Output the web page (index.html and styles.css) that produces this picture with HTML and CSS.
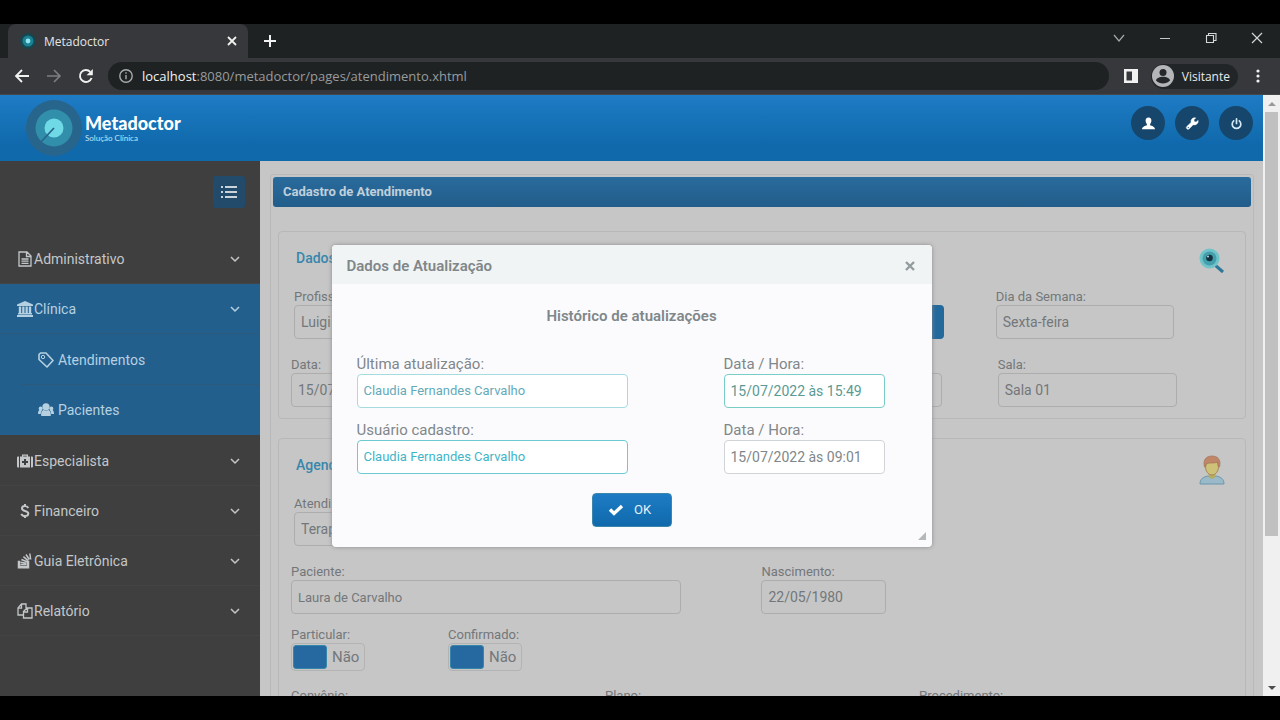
FILE: index.html
```html
<!DOCTYPE html>
<html lang="pt-BR">
<head>
<meta charset="utf-8">
<title>Metadoctor</title>
<link rel="stylesheet" href="styles.css">
</head>
<body>
<div class="browser">
  <div class="tabstrip">
    <div class="tab">
      <svg class="favicon" viewBox="0 0 16 16"><circle cx="8" cy="8" r="8" fill="#17464f"/><circle cx="8" cy="8" r="5.500" fill="#1b8294"/><circle cx="8" cy="8" r="2.400" fill="#8fe6ee"/></svg>
      <span class="tab-title">Metadoctor</span>
      <button class="chrome-btn" aria-label="Fechar guia"><svg width="16" height="16" viewBox="0 0 16 16" fill="none" stroke="#f1f1f1" stroke-width="1.8"><path d="M4 4l8 8M12 4l-8 8"/></svg></button>
    </div>
    <button class="chrome-btn new-tab" aria-label="Nova guia"><svg width="16" height="16" viewBox="0 0 16 16" fill="none" stroke="#f1f1f1" stroke-width="2"><path d="M8 2v12M2 8h12"/></svg></button>
    <div class="window-buttons">
      <button class="chrome-btn" aria-label="Pesquisar guias"><svg width="16" height="16" viewBox="0 0 16 16" fill="none" stroke="#a5a7a8" stroke-width="1.2"><path d="M3 5l5 6 5-6"/></svg></button>
      <button class="chrome-btn" aria-label="Minimizar"><svg width="16" height="16" viewBox="0 0 16 16" fill="none" stroke="#c5c7c8"><path d="M3 8.5h10"/></svg></button>
      <button class="chrome-btn" aria-label="Restaurar"><svg width="16" height="16" viewBox="0 0 16 16" fill="none" stroke="#d5d7d8" stroke-width="1.1"><path d="M3.500 5.500h7v7h-7zM5.500 5.500v-2h7.500v7h-2.500"/></svg></button>
      <button class="chrome-btn" aria-label="Fechar"><svg width="16" height="16" viewBox="0 0 16 16" fill="none" stroke="#d5d7d8" stroke-width="1.2"><path d="M3 3l10 10M13 3L3 13"/></svg></button>
    </div>
  </div>

  <div class="toolbar">
    <button class="chrome-btn" aria-label="Voltar"><svg width="16" height="16" viewBox="0 0 16 16" fill="none" stroke="#f1f1f1" stroke-width="1.8"><path d="M15 8H2M8 2L2 8l6 6"/></svg></button>
    <button class="chrome-btn" aria-label="Avançar"><svg width="16" height="16" viewBox="0 0 16 16" fill="none" stroke="#7c7f81" stroke-width="1.6"><path d="M1 8h13M8 2l6 6-6 6"/></svg></button>
    <button class="chrome-btn" aria-label="Recarregar"><svg width="16" height="16" viewBox="0 0 16 16"><path d="M13.600 10A6 6 0 1 1 12.300 3.800" fill="none" stroke="#f1f1f1" stroke-width="1.9"/><path d="M14.800 1v6.200H8.600z" fill="#f1f1f1"/></svg></button>
    <div class="address">
      <svg width="16" height="16" viewBox="0 0 16 16" fill="none" stroke="#a9abad" stroke-width="1.4"><circle cx="8" cy="8" r="6.200"/><path d="M8 7v4.300M8 4.300v1.500"/></svg>
      <span class="url"><b>localhost</b>:8080/metadoctor/pages/atendimento.xhtml</span>
    </div>
    <button class="chrome-btn" aria-label="Painel lateral"><svg width="16" height="16" viewBox="0 0 16 16"><path d="M1 1h14v14H1zM3.500 3.500v9h5.500v-9z" fill="#f1f1f1" fill-rule="evenodd"/></svg></button>
    <button class="profile"><svg width="22" height="22" viewBox="0 0 22 22"><circle cx="11" cy="11" r="11" fill="#b3b5b8"/><circle cx="11" cy="7.500" r="3.500" fill="#25282b"/><path d="M4 15.500c1-5 13-5 14 0-3.500 4-10.500 4-14 0z" fill="#25282b"/></svg>Visitante</button>
    <button class="chrome-btn" aria-label="Menu"><svg width="16" height="16" viewBox="0 0 16 16" fill="#f1f1f1"><circle cx="8" cy="3" r="1.600"/><circle cx="8" cy="8" r="1.600"/><circle cx="8" cy="13" r="1.600"/></svg></button>
  </div>

  <div class="viewport">
    <div class="page">
      <header class="topbar">
        <a class="brand" href="#">
          <svg class="logo" viewBox="0 0 56 56"><circle cx="28" cy="28" r="28" fill="#28658c"/><circle cx="28" cy="28" r="18.500" fill="#318fac"/><circle cx="28" cy="28" r="9.500" fill="#6fdae5"/><path d="M28 28L13 44" stroke="#28658c" stroke-width="1.800"/></svg>
          <span class="brand-text"><strong>Metadoctor</strong><small>Solução Clínica</small></span>
        </a>
        <nav class="top-actions">
          <button aria-label="Usuário"><svg viewBox="0 0 16 16" fill="#fff"><path d="M8 1.500c2.200 0 3.200 1.500 3.100 3.600-.1 1.800-.8 2.700-1.400 3.500v1.200c1.900.8 4.800 1.300 5.300 4.200H1c.5-2.900 3.400-3.400 5.300-4.200V8.600C5.700 7.800 5 6.900 4.900 5.100 4.800 3 5.800 1.500 8 1.500z"/></svg></button>
          <button aria-label="Configurações"><svg viewBox="0 0 16 16"><path d="M14 4.700a4 4 0 0 1-5.300 4.500L4.500 13.600a1.700 1.700 0 0 1-2.500-2.500l4.500-4.200A4 4 0 0 1 11.400 2L9.500 4l.3 2.100 2.100.4z" fill="#fff" stroke="#fff" stroke-width=".6"/><circle cx="3.500" cy="12.300" r=".7" fill="#16466b"/></svg></button>
          <button aria-label="Sair"><svg viewBox="0 0 16 16" fill="none" stroke="#d5ecf8" stroke-width="1.800" stroke-linecap="round"><path d="M5 5.200a4.600 4.600 0 1 0 6 0M8 3v5"/></svg></button>
        </nav>
      </header>

      <div class="shell">
        <aside class="sidebar">
          <button class="menu-toggle" aria-label="Alternar menu"><svg width="16" height="16" viewBox="0 0 16 16" stroke="#c9d3d9" stroke-width="2"><path d="M0 3h2M4 3h12M0 8h2M4 8h12M0 13h2M4 13h12"/></svg></button>
          <ul class="menu">
            <li><a href="#"><svg viewBox="0 0 16 16" fill="none" stroke="currentColor" stroke-width="1.300"><path d="M2 1h8l4 4v10H2zM9.500 1v4.500H14M4.500 8h7M4.500 10.200h7M4.500 12.400h7"/></svg>Administrativo<svg class="chev" viewBox="0 0 10 10"><path d="M1 3l4 4 4-4"/></svg></a></li>
            <li class="open"><a href="#"><svg viewBox="0 0 16 16" fill="currentColor"><path d="M8 0l8 3.500V5H0V3.500zM1.800 5.500h2.400v6.500h1V5.500h2.300v6.500h1V5.500h2.300v6.500h1V5.500h2.400v6.500h.8v1.500H1V12h.8zM0 14h16v2H0z"/></svg>Clínica<svg class="chev" viewBox="0 0 10 10"><path d="M1 3l4 4 4-4"/></svg></a>
              <ul class="submenu">
                <li><a href="#"><svg viewBox="0 0 16 16" fill="none" stroke="currentColor" stroke-width="1.600"><path d="M1 2.500L2.500 1H8l7 7.500L9 15 1 7.500z" stroke-linejoin="round"/><circle cx="5" cy="5" r="1.700" stroke-width="1"/></svg>Atendimentos</a></li>
                <li><a href="#"><svg viewBox="0 0 16 16" fill="currentColor"><circle cx="8" cy="4.800" r="3.600"/><circle cx="2.700" cy="6.500" r="2"/><circle cx="13.300" cy="6.500" r="2"/><path d="M3.300 14c-.8-4 1.500-6 2.500-6 1.300 1 3.100 1 4.400 0 1 0 3.300 2 2.500 6zM0 12C0 9 1 8 1.500 8h2.800C3 9.500 2.800 11 2.800 12H0zM16 12c0-3-1-4-1.500-4h-2.800c1.300 1.500 1.500 3 1.500 4H16z"/></svg>Pacientes</a></li>
              </ul>
            </li>
            <li><a href="#"><svg viewBox="0 0 16 16" fill="currentColor"><path d="M0 4.500Q0 3.500 1 3.500h1v11H1q-1 0-1-1zM14 3.500h1q1 0 1 1v9q0 1-1 1h-1zM3 3.500h2V1.500h6v2h2v11H3zM6.200 2.700v.8h3.600v-.8zM7 6v2H5v2h2v2h2v-2h2V8H9V6z" fill-rule="evenodd"/></svg>Especialista<svg class="chev" viewBox="0 0 10 10"><path d="M1 3l4 4 4-4"/></svg></a></li>
            <li><a href="#"><svg viewBox="0 0 16 16" fill="none" stroke="currentColor" stroke-width="2"><path d="M11.300 5C10.500 3.500 9.300 3 8 3 6.300 3 5 3.900 5 5.400c0 3.300 6.300 1.900 6.300 5.100C11.300 12 10 13 8 13c-1.700 0-3-.5-3.700-2.200M8 1v2M8 13v2"/></svg>Financeiro<svg class="chev" viewBox="0 0 10 10"><path d="M1 3l4 4 4-4"/></svg></a></li>
            <li><a href="#"><svg viewBox="0 0 16 16" fill="none" stroke="currentColor" stroke-width="1.500"><path d="M1.500 8.500h1v5h8v-5h1v6.300h-10z" fill="currentColor"/><path d="M3.500 11.600h6M3.500 9.300l6 .9M4.400 6.500l5.600 2.300M6.400 3.600l4.700 4M9 1.500l3.300 5M12.800.5l.9 6"/></svg>Guia Eletrônica<svg class="chev" viewBox="0 0 10 10"><path d="M1 3l4 4 4-4"/></svg></a></li>
            <li><a href="#"><svg viewBox="0 0 16 16" fill="none" stroke="currentColor" stroke-width="1.300"><path d="M6.500 12H1V5l3.500-4H9v4M4.500 1v4.200H1M6.500 8.500L10 5h5v10H6.500zM10.500 5v4h-4"/></svg>Relatório<svg class="chev" viewBox="0 0 10 10"><path d="M1 3l4 4 4-4"/></svg></a></li>
          </ul>
        </aside>

        <main class="content">
          <div class="panel">
            <h1 class="panel-title">Cadastro de Atendimento</h1>
            <section class="card">
              <div class="card-head">
                <h2>Dados</h2>
                <svg class="card-icon" viewBox="0 0 26 30"><path d="M16 17l8 7" stroke="#2d7898" stroke-width="3"/><circle cx="10.500" cy="10.500" r="10" fill="#6fc3c9"/><circle cx="10.500" cy="10.500" r="7" fill="#449fac"/><circle cx="10.500" cy="10" r="3.300" fill="#12303e"/><circle cx="9" cy="8.500" r="1" fill="#b9dce0"/></svg>
              </div>
              <div class="row row-a">
                <div class="field"><label for="prof">Profissional:</label><div class="combo"><select id="prof"><option>Luigi</option></select><button aria-label="Abrir lista"><svg width="10" height="10" viewBox="0 0 10 10" fill="#cfe0ea"><path d="M1 3h8L5 8z"/></svg></button></div></div>
                <div class="field"><label for="dia">Dia da Semana:</label><input id="dia" value="Sexta-feira" readonly></div>
              </div>
              <div class="row row-b">
                <div class="field"><label for="data">Data:</label><input id="data" value="15/07/2022" readonly></div>
                <div class="field"><label for="sala">Sala:</label><input id="sala" value="Sala 01" readonly></div>
              </div>
            </section>
            <section class="card">
              <div class="card-head">
                <h2>Agendamento</h2>
                <svg class="card-icon" viewBox="0 0 26 30"><path d="M1 29c0-5 3-7 8-8l4 2 4-2c5 1 8 3 8 8z" fill="#9abaca" stroke="#6a97ad"/><path d="M9.500 17h7v5L13 24l-3.500-2z" fill="#b5ac62"/><ellipse cx="13" cy="12" rx="6.500" ry="8" fill="#cdc277" stroke="#a88a58"/><path d="M5.500 12C3.500 4 8 1 13 1s9.500 3 7.500 11l-1.500-1V7c-5 2-9 0-12 2v2z" fill="#c08668" stroke="#a3735a" stroke-width=".7"/></svg>
              </div>
              <div class="row row-c">
                <div class="field"><label for="atend">Atendimento:</label><input id="atend" value="Terapia" readonly></div>
              </div>
              <div class="row row-d">
                <div class="field"><label for="pac">Paciente:</label><input class="name" id="pac" value="Laura de Carvalho" readonly></div>
                <div class="field"><label for="nasc">Nascimento:</label><input id="nasc" value="22/05/1980" readonly></div>
              </div>
              <div class="row row-e">
                <div class="field"><label for="part">Particular:</label><div class="switch"><input type="checkbox" id="part"><span>Não</span></div></div>
                <div class="field"><label for="conf">Confirmado:</label><div class="switch"><input type="checkbox" id="conf"><span>Não</span></div></div>
              </div>
              <div class="row row-f">
                <div class="field"><label for="conv">Convênio:</label><input id="conv"></div>
                <div class="field"><label for="plano">Plano:</label><input id="plano"></div>
                <div class="field"><label for="proc">Procedimento:</label><input id="proc"></div>
              </div>
            </section>
          </div>
        </main>
      </div>

      <div class="overlay">
        <div class="dialog" role="dialog" aria-labelledby="dlg-title">
          <div class="dialog-head">
            <h2 id="dlg-title">Dados de Atualização</h2>
            <button aria-label="Fechar"><svg width="12" height="12" viewBox="0 0 12 12" stroke="#929b9d" stroke-width="2.400"><path d="M2 2l8 8M10 2l-8 8"/></svg></button>
          </div>
          <div class="dialog-body">
            <h3>Histórico de atualizações</h3>
            <div class="history">
              <div class="field"><label for="ult">Última atualização:</label><input class="name teal soft" id="ult" value="Claudia Fernandes Carvalho" readonly></div>
              <div class="field"><label for="dh1">Data / Hora:</label><input class="green" id="dh1" value="15/07/2022 às 15:49" readonly></div>
              <div class="field"><label for="usu">Usuário cadastro:</label><input class="name teal" id="usu" value="Claudia Fernandes Carvalho" readonly></div>
              <div class="field"><label for="dh2">Data / Hora:</label><input id="dh2" value="15/07/2022 às 09:01" readonly></div>
            </div>
            <button class="ok"><svg width="16" height="16" viewBox="0 0 16 16" fill="none" stroke="#fff" stroke-width="3.400"><path d="M2 7.500l4 4L14 4"/></svg>OK</button>
          </div>
          <svg class="grip" viewBox="0 0 8 8"><path d="M8 0v8H0z" fill="#b4b8ba"/></svg>
        </div>
      </div>
    </div>
    <div class="scrollbar"><span class="arrow up"></span><span class="thumb"></span><span class="arrow down"></span></div>
  </div>
</div>
</body>
</html>
```
FILE: styles.css
```css
* { box-sizing: border-box; }
body {
  margin: 0;
  background: #000;
  font-family: Roboto, "Liberation Sans", sans-serif;
  font-size: 14px;
}
button { border: 0; background: none; padding: 0; font: inherit; color: inherit; }
a { color: inherit; text-decoration: none; }
h1, h2, h3, ul { margin: 0; padding: 0; }
ul { list-style: none; }
svg { display: block; flex: none; }

.browser { height: 100vh; padding: 24px 0; display: flex; flex-direction: column; }
.chrome-btn { display: grid; place-items: center; width: 16px; height: 16px; }
.tabstrip { flex: none; height: 34px; background: #1f2223; display: flex; align-items: center; padding-left: 8px; font-family: "Open Sans", sans-serif; }
.tab { width: 240px; height: 34px; display: flex; align-items: center; gap: 8px; padding: 0 8px 0 12px; background: #36383b; border-radius: 8px 8px 0 0; color: #e4e6e7; font-size: 12px; }
.tab-title { flex: 1; }
.favicon { width: 16px; height: 16px; }
.new-tab { margin-left: 14px; }
.window-buttons { margin-left: auto; display: flex; gap: 30px; padding: 0 15px 6px 0; }

.toolbar { flex: none; height: 37px; background: #36383b; display: flex; align-items: center; gap: 16px; padding: 0 14px; border-bottom: 1px solid #45484a; font-family: "Open Sans", sans-serif; }
.address { flex: 1; height: 28px; margin: 0 -2px; padding: 0 10px; border-radius: 14px; background: #1f2223; display: flex; align-items: center; gap: 8px; color: #989b9d; font-size: 13px; }
.url b { font-weight: 500; color: #f1f1f1; }
.profile { height: 25px; margin: 0 -4px; padding: 0 8px 0 1px; border-radius: 13px; background: #222527; display: flex; align-items: center; gap: 8px; color: #e9eaeb; font-size: 12px; }

.viewport { flex: 1; min-height: 0; display: flex; overflow: hidden; }
.page { flex: 1; min-width: 0; position: relative; display: flex; flex-direction: column; background: #c6c6c6; overflow: hidden; }
.topbar { flex: none; height: 66px; display: flex; justify-content: space-between; padding: 5px 10px 5px 26px; background: linear-gradient(#1e7cc5, #1069ab 75%); }
.brand { display: flex; align-items: center; gap: 3px; color: #fff; font-family: Lato, sans-serif; }
.logo { width: 56px; height: 56px; }
.brand-text { display: flex; flex-direction: column; }
.brand-text strong { font-size: 18px; line-height: 20px; font-weight: 900; }
.brand-text small { font-size: 8px; line-height: 10px; color: #c3e4f7; }
.top-actions { display: flex; gap: 10px; padding-top: 6px; }
.top-actions button { width: 34px; height: 34px; border-radius: 50%; background: #16466b; display: grid; place-items: center; }
.top-actions svg { width: 15px; height: 15px; }

.shell { flex: 1; min-height: 0; display: flex; overflow: hidden; }
.sidebar { flex: none; width: 260px; background: #3f3f3f; color: #c3c7c9; padding-top: 15px; font-size: 14px; }
.menu-toggle { display: grid; place-items: center; width: 32px; height: 32px; margin: 0 15px 26px auto; border-radius: 3px; background: #224b6b; }
.menu a { display: flex; align-items: center; gap: 1px; height: 50px; padding: 0 20px 0 17px; border-bottom: 1px solid #444; }
.menu a > svg { width: 16px; height: 16px; }
.menu a > .chev { width: 10px; height: 10px; margin-left: auto; fill: none; stroke: currentColor; stroke-width: 1.500; }
.open { background: #235f8d; color: #b5d1e1; margin-bottom: 1px; }
.menu .open a { border-color: #2c5a7c; }
.submenu { padding-top: 1px; }
.menu .submenu a { gap: 4px; margin-left: 20px; padding-left: 18px; }
.submenu li:last-child a { border: 0; }

.content { flex: 1; min-width: 0; padding: 13px 9px 0 10px; overflow: hidden; color: #73777a; }
.panel { border: 1px solid #b9b9b9; border-radius: 3px; padding: 2px; }
.panel-title { height: 30px; padding: 0 10px; border-radius: 3px; background: linear-gradient(#296b9d, #225d8a); color: #c0d0da; font-size: 13px; line-height: 30px; font-weight: 700; }
.card { margin: 19px 5px 0 5px; padding: 6px 12px 11px; border: 1px solid #b8b8b8; border-radius: 4px; }
.panel-title + .card { margin-top: 24px; }
.card-head { height: 50px; display: flex; justify-content: space-between; padding: 10px 8px 0 5px; }
.card-head h2 { font-size: 14px; line-height: 20px; font-weight: 500; color: #3787ac; }
.card-icon { width: 26px; height: 30px; }

.field { display: flex; flex-direction: column; min-width: 0; }
.field label { font-size: 13px; line-height: 17px; white-space: nowrap; }
input, select { font: inherit; color: inherit; height: 34px; width: 100%; min-width: 0; margin: 0; padding: 0 6px; border: 1px solid #adadad; border-radius: 4px; background: transparent; }
.name { font-size: 13px; }
select { appearance: none; }
.combo { display: flex; }
.combo select { border-radius: 4px 0 0 4px; }
.combo button { flex: none; width: 34px; display: grid; place-items: center; background: #23699c; border-radius: 0 4px 4px 0; }
.row { display: grid; align-items: start; }
.row-a { grid-template-columns: 649fr 178fr; gap: 52px; padding: 0 59px 0 3px; }
.row-b { grid-template-columns: 650fr 179fr; gap: 56px; padding-right: 56px; margin-top: 17px; }
.row-c { grid-template-columns: 1fr 1fr; padding-left: 3px; }
.row-d { grid-template-columns: 390fr 124fr 267fr; column-gap: 80px; margin-top: 17px; }
.row-e { grid-template-columns: 157px 157px; margin-top: 12px; }
.row-f { grid-template-columns: 1fr 1fr 1fr; margin-top: 16px; }

.switch { align-self: flex-start; display: flex; align-items: center; gap: 5px; height: 28px; padding: 0 5px 0 1px; border: 1px solid #b3b3b3; border-radius: 4px; font-size: 15px; }
.switch input { appearance: none; width: 34px; height: 24px; padding: 0; border: 1px solid #3787ac; border-radius: 3px; background: #2569a0; }

.overlay { position: absolute; inset: 0; display: grid; place-items: center; }
.dialog { position: relative; width: 600px; background: #fbfbfd; border-radius: 4px; overflow: hidden; color: #80878a; box-shadow: 0 0 4px #8a8a8a; }
.dialog-head { height: 39px; padding: 4px 16px 0 15px; display: flex; align-items: center; justify-content: space-between; background: #f1f4f5; }
.dialog h2, .dialog h3 { font-size: 15px; line-height: 20px; font-weight: 600; }
.dialog-body { padding: 22px 25px 20px; display: flex; flex-direction: column; align-items: center; }
.history { align-self: stretch; display: grid; grid-template-columns: 271px 161px; column-gap: 96px; row-gap: 12px; margin: 28px 0 19px; }
.history label { font-size: 15px; line-height: 20px; }
.history input { background: #fff; border-color: #d0d4d6; height: 34px; }
.history .teal { color: #3fb5c8; border-color: #6bcbd2; }
.history .soft { color: #65aaba; border-color: #a4dce0; }
.history .green { color: #5a9a94; border-color: #78cdc6; }
.ok { width: 80px; height: 34px; display: flex; align-items: center; justify-content: center; gap: 10px; padding-right: 4px; border: 1px solid #3c86ae; border-radius: 4px; background: linear-gradient(#1e7cc5, #1069ab); color: #e5f1f8; font-size: 13px; }
.grip { position: absolute; right: 6px; bottom: 7px; width: 8px; height: 8px; }

.scrollbar { flex: none; width: 17px; background: #f0f0f0; display: flex; flex-direction: column; align-items: center; }
.thumb { width: 13px; height: 424px; background: #c0c0c0; }
.arrow { height: 17px; display: grid; place-items: center; }
.arrow::before { content: ""; border: 4px solid transparent; }
.up::before { border-bottom-color: #9a9a9a; border-top: 0; }
.down::before { border-top-color: #4c4c4c; border-bottom: 0; }
.down { margin-top: auto; }
```
